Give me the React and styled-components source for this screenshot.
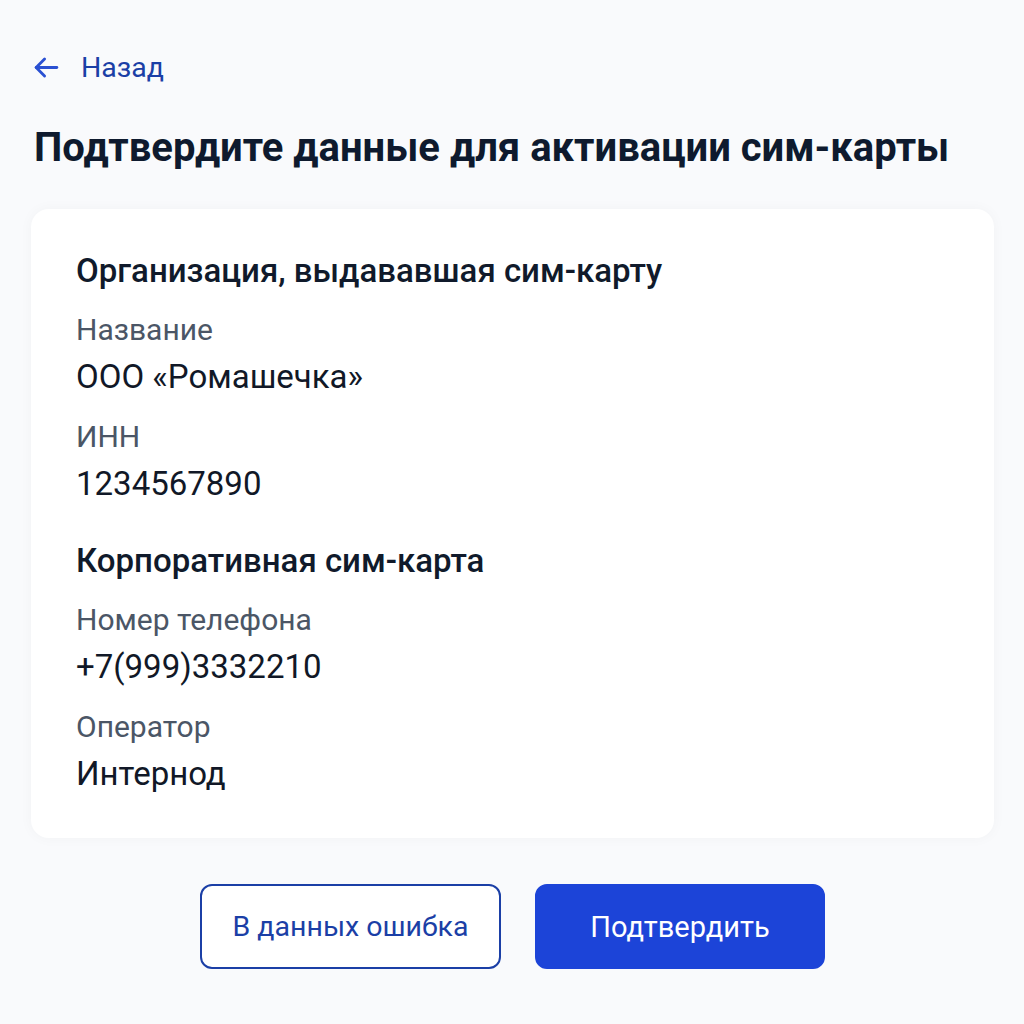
import React from 'react'
import styled, { createGlobalStyle } from 'styled-components'

const GlobalStyle = createGlobalStyle`
  html, body {
    margin: 0;
    padding: 0;
    background: #f9fafc;
  }
  body {
    font-family: Roboto, "Noto Sans", "Liberation Sans", sans-serif;
    -webkit-font-smoothing: antialiased;
  }
`

const Page = styled.div`
  min-height: 1024px;
  box-sizing: border-box;
  padding: 51px 30px 40px 31px;
  display: flex;
  flex-direction: column;
`

const BackLink = styled.a`
  display: flex;
  align-items: center;
  gap: 19px;
  height: 32px;
  color: #1b3fa6;
  font-size: 28.5px;
  text-decoration: none;
  cursor: pointer;
  svg {
    width: 31px;
    height: 31px;
  }
`

const Title = styled.h1`
  margin: 43px 0 0 3px;
  font-size: 40px;
  line-height: 44px;
  font-weight: 700;
  color: #0e1a2e;
  white-space: nowrap;
`

const Card = styled.section`
  margin-top: 39px;
  background: #ffffff;
  border-radius: 18px;
  box-shadow: 0 0 14px rgba(20, 30, 60, 0.035);
  padding: 43px 45px 44px;
  display: flex;
  flex-direction: column;
`

const SectionTitle = styled.h2`
  margin: ${p => (p.$first ? '0' : '38px')} 0 0;
  font-size: 33px;
  line-height: 38px;
  font-weight: 500;
  color: #101a2b;
`

const Label = styled.div`
  margin-top: 22px;
  font-size: 30px;
  line-height: 36px;
  color: #4b5666;
`

const Value = styled.div`
  margin-top: 9px;
  font-size: 33px;
  line-height: 40px;
  color: #111827;
`

const Actions = styled.div`
  margin-top: 46px;
  display: flex;
  justify-content: center;
  gap: 34px;
`

const Button = styled.button`
  height: 85px;
  box-sizing: border-box;
  border-radius: 12px;
  font-family: inherit;
  font-size: ${p => (p.$primary ? 29 : 28.5)}px;
  cursor: pointer;
  padding: 0;
  width: ${p => p.$width}px;
  border: 2px solid ${p => (p.$primary ? '#1c44d8' : '#1b3fa6')};
  background: ${p => (p.$primary ? '#1c44d8' : '#ffffff')};
  color: ${p => (p.$primary ? '#ffffff' : '#1b3fa6')};
`

const fields = [
  {
    title: 'Организация, выдававшая сим-карту',
    rows: [
      ['Название', 'ООО «Ромашечка»'],
      ['ИНН', '1234567890'],
    ],
  },
  {
    title: 'Корпоративная сим-карта',
    rows: [
      ['Номер телефона', '+7(999)3332210'],
      ['Оператор', 'Интернод'],
    ],
  },
]

const App = () => (
  <>
    <GlobalStyle />
    <Page>
      <BackLink>
        <svg viewBox="0 0 24 24" fill="none" stroke="#2a50d2" strokeWidth="2.2" strokeLinecap="round" strokeLinejoin="round">
          <path d="M20 12H4" />
          <path d="M10.5 5.5L4 12l6.5 6.5" />
        </svg>
        Назад
      </BackLink>
      <Title>Подтвердите данные для активации сим-карты</Title>
      <Card>
        {fields.map((section, i) => (
          <React.Fragment key={section.title}>
            <SectionTitle $first={i === 0}>{section.title}</SectionTitle>
            {section.rows.map(([label, value]) => (
              <React.Fragment key={label}>
                <Label>{label}</Label>
                <Value>{value}</Value>
              </React.Fragment>
            ))}
          </React.Fragment>
        ))}
      </Card>
      <Actions>
        <Button $width={301}>В данных ошибка</Button>
        <Button $primary $width={290}>Подтвердить</Button>
      </Actions>
    </Page>
  </>
)

export default App
